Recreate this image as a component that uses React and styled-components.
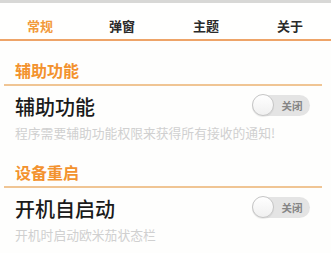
import React from 'react'
import styled, { createGlobalStyle } from 'styled-components'

const GlobalStyle = createGlobalStyle`
  * {
    margin: 0;
    padding: 0;
    box-sizing: border-box;
  }
  body {
    background-color: #fefefd;
    font-family: "Noto Sans CJK SC", "Noto Sans", sans-serif;
  }
`

const Page = styled.div`
  width: 331px;
  height: 253px;
  overflow: hidden;
  background-color: #fefefd;
`

const TopStrip = styled.div`
  height: 3px;
  background-color: #d8d8d6;
`

const TabBar = styled.div`
  display: grid;
  grid-template-columns: 80px 84px 84px 84px;
  height: 38px;
  padding: 16px 0 6px;
  border-bottom: 2px solid #eea468;
  background-color: #fffffe;
`

const Tab = styled.div`
  text-align: center;
  font-size: 13px;
  line-height: 14px;
  font-weight: 700;
  color: ${p => (p.active ? '#f29a3c' : '#2a2a2a')};
`

const SectionHeader = styled.div`
  margin: 0 9px 0 4px;
  padding: 20px 0 5px 11px;
  border-bottom: 2px solid #f0c594;
  font-size: 16px;
  line-height: 18px;
  font-weight: 700;
  color: #f3922e;
`

const Item = styled.div`
  padding: 9px 21px 3px 15px;
`

const TitleRow = styled.div`
  display: flex;
  align-items: center;
  justify-content: space-between;
`

const Title = styled.div`
  font-size: 20px;
  line-height: 24px;
  font-weight: 500;
  color: #1a1a1a;
`

const Subtitle = styled.div`
  margin-top: 6px;
  font-size: 12.8px;
  line-height: 15px;
  color: #d0d0d0;
  white-space: nowrap;
`

const Toggle = styled.div`
  display: flex;
  align-items: center;
  width: 58px;
  height: 21px;
  margin-top: -4px;
  border-radius: 11px;
  background-color: #e4e4e4;
`

const Knob = styled.div`
  width: 22px;
  height: 22px;
  border-radius: 50%;
  background: linear-gradient(#ffffff, #f0f0f0);
  border: 1px solid #c6c6c6;
  box-shadow: 0 1px 1px rgba(0, 0, 0, 0.08);
`

const ToggleLabel = styled.span`
  flex: 1;
  text-align: center;
  font-size: 10.5px;
  font-weight: 700;
  color: #858585;
`

const tabs = ['常规', '弹窗', '主题', '关于']

const sections = [
  {
    header: '辅助功能',
    title: '辅助功能',
    desc: '程序需要辅助功能权限来获得所有接收的通知!',
  },
  {
    header: '设备重启',
    title: '开机自启动',
    desc: '开机时启动欧米茄状态栏',
  },
]

export default function App() {
  return (
    <Page>
      <GlobalStyle />
      <TopStrip />
      <TabBar>
        {tabs.map((t, i) => (
          <Tab key={t} active={i === 0}>{t}</Tab>
        ))}
      </TabBar>
      {sections.map(s => (
        <div key={s.header}>
          <SectionHeader>{s.header}</SectionHeader>
          <Item>
            <TitleRow>
              <Title>{s.title}</Title>
              <Toggle>
                <Knob />
                <ToggleLabel>关闭</ToggleLabel>
              </Toggle>
            </TitleRow>
            <Subtitle>{s.desc}</Subtitle>
          </Item>
        </div>
      ))}
    </Page>
  )
}
